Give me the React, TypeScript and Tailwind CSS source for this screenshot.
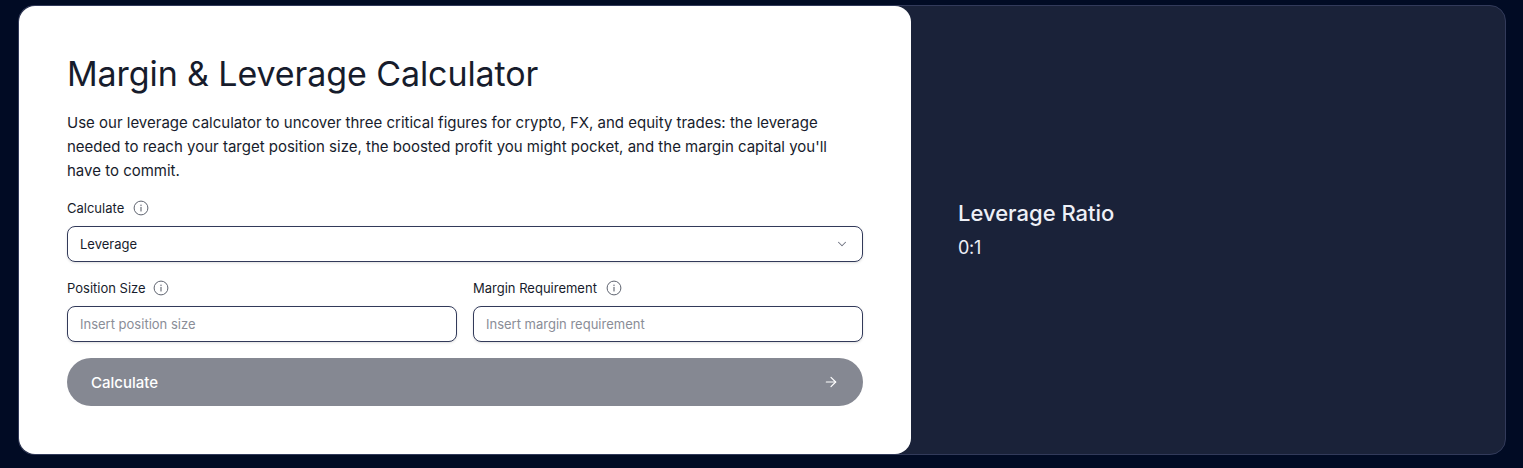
import { ArrowRight, ChevronDown } from 'lucide-react';

function InfoIcon() {
  return (
    <svg width="16" height="16" viewBox="0 0 16 16" fill="none" className="shrink-0 text-[#5f6470]">
      <circle cx="8" cy="8" r="6.9" stroke="currentColor" strokeWidth="1" />
      <path d="M8 7.4v3.6" stroke="currentColor" strokeWidth="1.1" strokeLinecap="round" />
      <circle cx="8" cy="5.2" r="0.7" fill="currentColor" />
    </svg>
  );
}

function FieldLabel({ text, gap }: { text: string; gap: string }) {
  return (
    <div className={`flex items-center ${gap} h-5 mb-2 text-[13px] leading-5 text-[#171c2c]`}>
      <span>{text}</span>
      <InfoIcon />
    </div>
  );
}

function TextField({ label, placeholder, gap }: { label: string; placeholder: string; gap: string }) {
  return (
    <div className="flex-1">
      <FieldLabel text={label} gap={gap} />
      <input
        type="text"
        placeholder={placeholder}
        className="w-full h-9 px-3 rounded-lg border border-[#323a5a] bg-white text-[13px] shadow-sm outline-none placeholder:text-[#8a8d97]"
      />
    </div>
  );
}

export default function App() {
  return (
    <div className="w-[1523px] h-[468px] overflow-hidden bg-[#010b24] pt-[5px] pl-[18px] font-['Inter',sans-serif]">
      <div className="flex w-[1488px] h-[450px] rounded-2xl border border-[#323a5a] bg-[#1a2239]">
        <div className="w-[892px] shrink-0 rounded-2xl bg-white p-12">
          <h1 className="text-[34px] leading-10 font-normal tracking-[-0.1px] text-[#171c2c] mb-[17px]">
            Margin &amp; Leverage Calculator
          </h1>
          <p className="text-[15px] leading-6 text-[#171c2c] mb-[15px]">
            Use our leverage calculator to uncover three critical figures for crypto, FX, and equity trades: the leverage
            needed to reach your target position size, the boosted profit you might pocket, and the margin capital you'll
            have to commit.
          </p>
          <FieldLabel text="Calculate" gap="gap-[9px]" />
          <div className="flex items-center justify-between h-9 pl-3 pr-[13px] rounded-lg border border-[#323a5a] text-[13px] text-[#171c2c] shadow-sm mb-4">
            <span className="pt-px">Leverage</span>
            <ChevronDown size={14} strokeWidth={1.75} className="text-[#6e7280]" />
          </div>
          <div className="flex gap-4 mb-4">
            <TextField label="Position Size" placeholder="Insert position size" gap="gap-[7px]" />
            <TextField label="Margin Requirement" placeholder="Insert margin requirement" gap="gap-[9px]" />
          </div>
          <button className="flex items-center justify-between w-full h-12 pl-6 pr-6 rounded-full bg-[#858892] text-[15px] font-medium text-white">
            <span className="pt-[2px]">Calculate</span>
            <ArrowRight size={16} strokeWidth={1.75} />
          </button>
        </div>
        <div className="flex flex-col justify-center flex-1 pl-[47px] text-[#eef0f7]">
          <h2 className="text-[22px] leading-7 font-medium mb-[7px]">Leverage Ratio</h2>
          <p className="text-[18px] leading-7 tracking-[-0.3px]">0:1</p>
        </div>
      </div>
    </div>
  );
}
